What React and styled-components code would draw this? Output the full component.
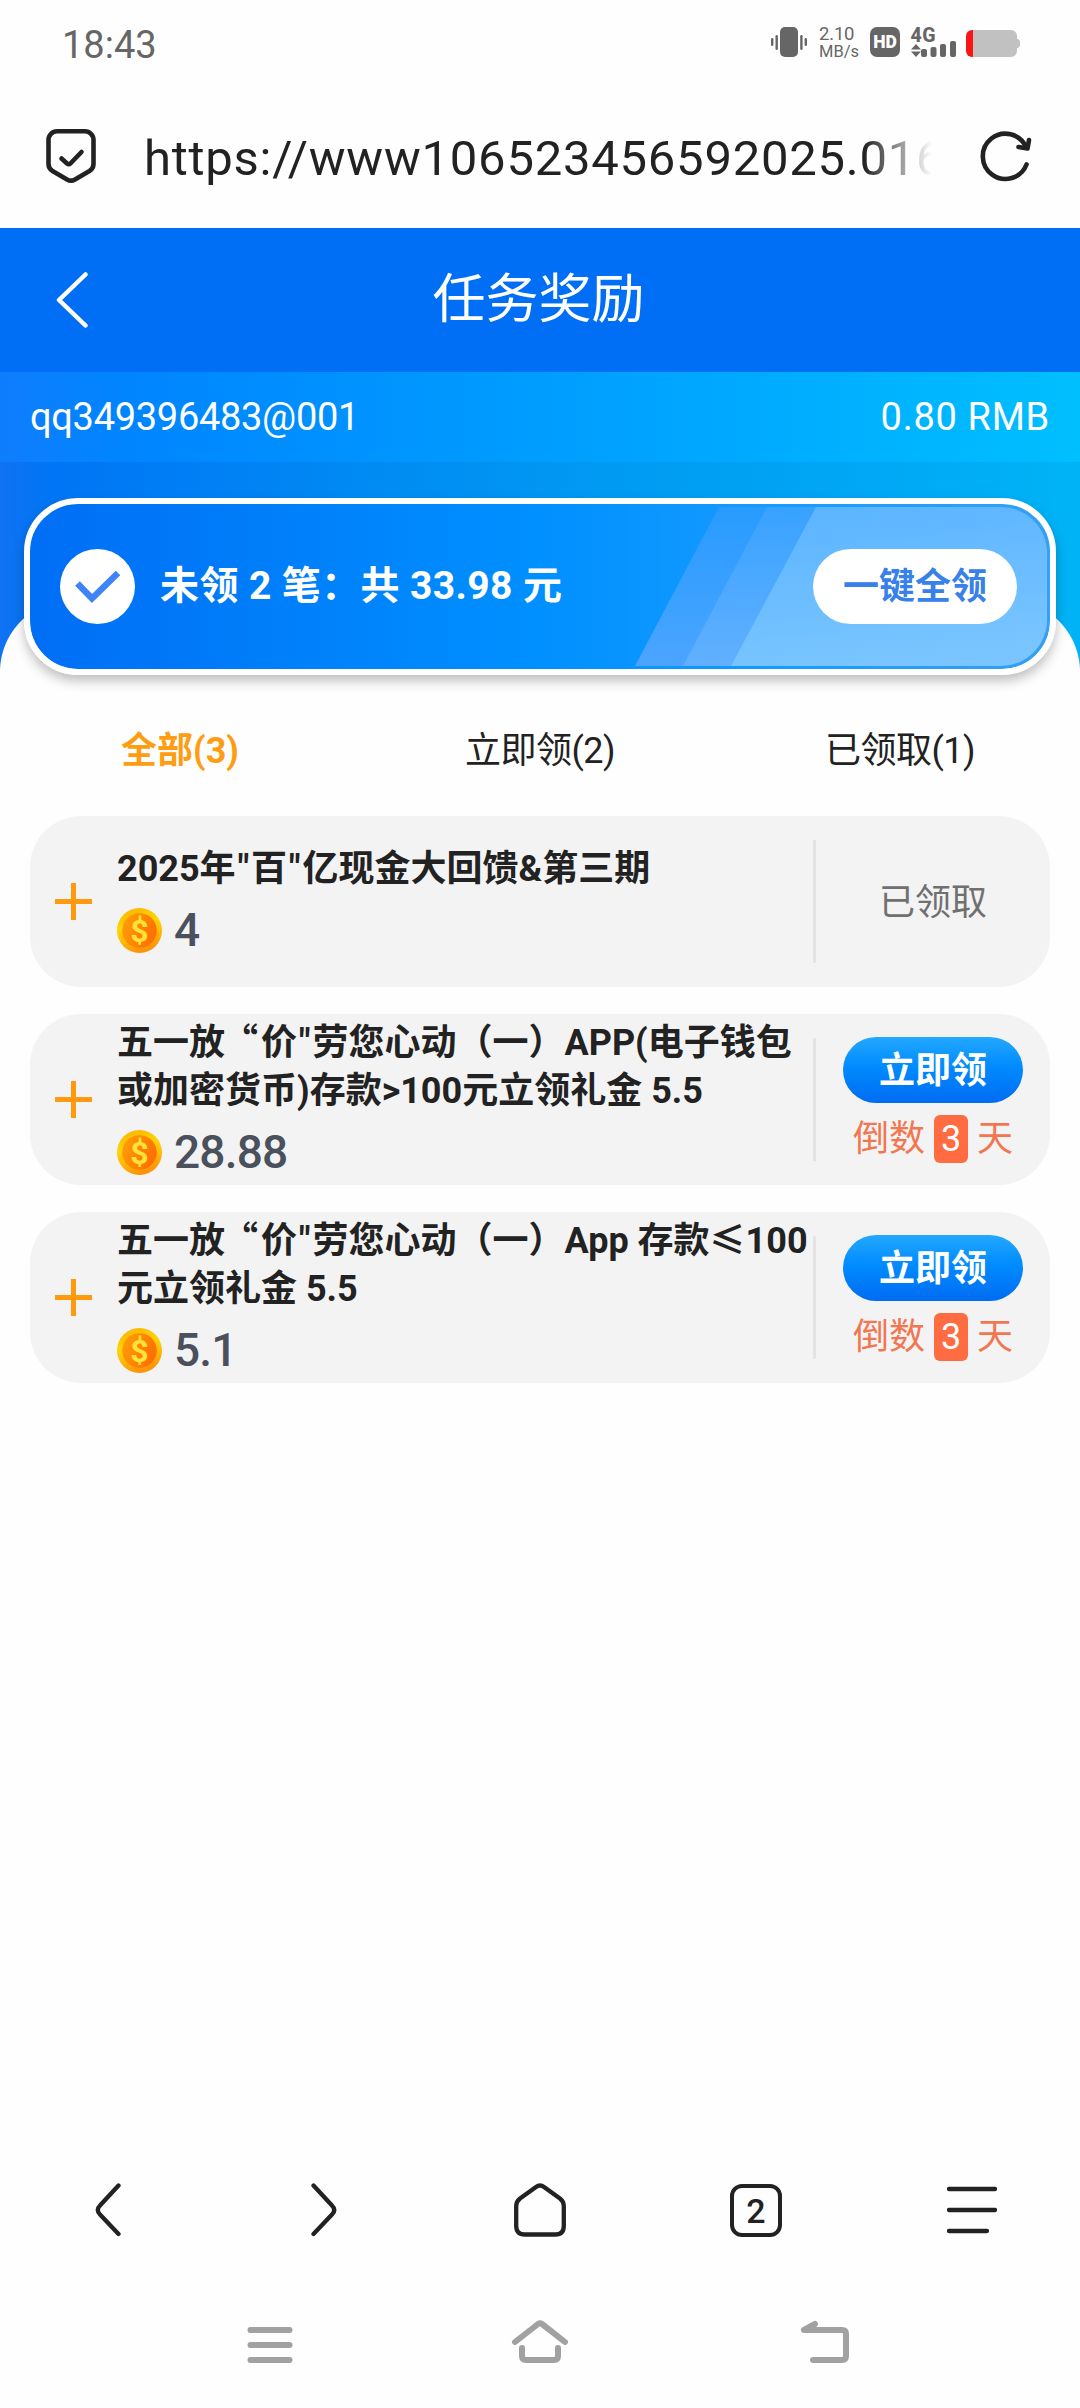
import { useState } from "react";
import styled, { createGlobalStyle } from "styled-components";

const tasks = [
	{
		id: 1,
		title: ['2025年"百"亿现金大回馈&第三期'],
		amount: "4",
		claimed: true,
	},
	{
		id: 2,
		title: ['五一放“价"劳您心动（一）APP(电子钱包', "或加密货币)存款>100元立领礼金 5.5"],
		amount: "28.88",
		days: 3,
	},
	{
		id: 3,
		title: ['五一放“价"劳您心动（一）App 存款≤100', "元立领礼金 5.5"],
		amount: "5.1",
		days: 3,
	},
];

const tabs = ["全部(3)", "立即领(2)", "已领取(1)"];

// the opening quote and ≤ need the full-width glyphs
function renderTitle(line) {
	return line.split(/([“"≤])/).map((part, i) => {
		if (part === "“") return <OpenQuote key={i}>{part}</OpenQuote>;
		if (part === "≤") return <WideGlyph key={i}>{part}</WideGlyph>;
		if (part === '"') return <Quote key={i}>{part}</Quote>;
		return part;
	});
}

function StatusIcons() {
	return (
		<StatusGroup>
			<svg width="36" height="30" viewBox="0 0 36 30" fill="#666">
				<rect x="9" y="0" width="18" height="30" rx="5" />
				<rect x="0" y="11" width="2.4" height="8" rx="1.2" />
				<rect x="4.5" y="8" width="2.4" height="15" rx="1.2" />
				<rect x="29.2" y="8" width="2.4" height="15" rx="1.2" />
				<rect x="33.6" y="11" width="2.4" height="8" rx="1.2" />
			</svg>
			<Speed>
				<span>2.10</span>
				<small>MB/s</small>
			</Speed>
			<Hd>HD</Hd>
			<Signal width="46" height="30" viewBox="0 0 46 30">
				<text x="0.5" y="14.8" fontSize="19.5" fontWeight="800" textLength="25">
					4G
				</text>
				<path d="M6 17l5 5.5H1zM6 30l5-5.5H1z" />
				<rect x="11" y="22" width="6" height="8" rx="2" />
				<rect x="20.5" y="20" width="6" height="10" rx="2" />
				<rect x="30" y="17" width="6" height="13" rx="2" />
				<rect x="40" y="14" width="6" height="16" rx="2" />
			</Signal>
			<svg width="54" height="30" viewBox="0 0 54 30">
				<path
					d="M6 3h39a6 6 0 0 1 6 6v3h1q2 1 2 3v3q0 2-2 3h-1v3a6 6 0 0 1-6 6H6z"
					fill="#c1c1c1"
				/>
				<path d="M7 3H6a6 6 0 0 0-6 6v15a6 6 0 0 0 6 6h1z" fill="#fb1414" />
			</svg>
		</StatusGroup>
	);
}

function Coin() {
	return (
		<svg width="45" height="45" viewBox="0 0 45 45">
			<defs>
				<linearGradient id="rim" x1="0.3" y1="0" x2="0.6" y2="1">
					<stop offset="0" stopColor="#ffb400" />
					<stop offset="0.35" stopColor="#ffd400" />
					<stop offset="0.6" stopColor="#ffbf05" />
					<stop offset="1" stopColor="#ff8c0a" />
				</linearGradient>
				<linearGradient id="face" x1="0" y1="0.2" x2="1" y2="0.6">
					<stop offset="0" stopColor="#ff9d0a" />
					<stop offset="1" stopColor="#ff6d00" />
				</linearGradient>
			</defs>
			<circle cx="22.5" cy="22.5" r="22.5" fill="url(#rim)" />
			<circle cx="22.5" cy="22.5" r="17.3" fill="url(#face)" />
			<text
				x="22.5"
				y="34"
				fontSize="32"
				fontWeight="700"
				textAnchor="middle"
				fill="#ffe437"
			>
				$
			</text>
		</svg>
	);
}

function TaskCard({ task }) {
	return (
		<Card>
			<Plus width="37" height="37" viewBox="0 0 37 37">
				<path d="M18.5 0v37M0 18.5h37" stroke="#ff9a10" strokeWidth="5" />
			</Plus>
			<CardBody>
				{task.title.map((line) => (
					<CardTitle key={line}>{renderTitle(line)}</CardTitle>
				))}
				<Reward>
					<Coin />
					<Amount>{task.amount}</Amount>
				</Reward>
			</CardBody>
			<CardSide>
				{task.claimed ? (
					<Claimed>已领取</Claimed>
				) : (
					<>
						<ClaimButton>立即领</ClaimButton>
						<Countdown>
							倒数<Days>{task.days}</Days>天
						</Countdown>
					</>
				)}
			</CardSide>
		</Card>
	);
}

export default function App() {
	const [activeTab, setActiveTab] = useState(0);

	return (
		<Page>
			<GlobalStyle />
			<StatusBar>
				<Clock>18:43</Clock>
				<StatusIcons />
			</StatusBar>
			<AddressBar>
				<ToolIcon width="50" height="56" viewBox="0 0 50 56">
					<path d="M11 3.3h28a8.5 8.5 0 0 1 8.5 8.5V36q0 4.5-4 7L29 51.5q-4 2.4-8 0L6.5 43q-4-2.5-4-7V11.8A8.5 8.5 0 0 1 11 3.3z" />
					<path d="M15.5 30.5l5.5 5q1.7 1.4 3.4 0L35.5 24" />
				</ToolIcon>
				<Url>https://www106523456592025.016</Url>
				<ToolIcon width="52" height="52" viewBox="0 0 52 52">
					<path d="M46.5 34.5A22.6 22.6 0 1 1 46 17" />
					<path d="M49 10l-1.5 8.5L38.5 17" />
				</ToolIcon>
			</AddressBar>

			<Header>
				<BackArrow width="32" height="56" viewBox="0 0 32 56">
					<path d="M29.5 2.5L3 28l26.5 25.5" />
				</BackArrow>
				<HeaderTitle>任务奖励</HeaderTitle>
			</Header>
			<Account>
				<span>qq349396483@001</span>
				<Balance>0.80 RMB</Balance>
			</Account>

			<Hero>
				<Banner>
					<BannerArt viewBox="0 0 412 159" width="412" height="159">
						<defs>
							<linearGradient id="s1" x1="0" y1="0" x2="0" y2="1">
								<stop offset="0" stopColor="#289bff" />
								<stop offset="1" stopColor="#4ba5ff" />
							</linearGradient>
							<linearGradient id="s2" x1="0" y1="0" x2="0" y2="1">
								<stop offset="0" stopColor="#38a2ff" />
								<stop offset="1" stopColor="#62b0ff" />
							</linearGradient>
							<linearGradient id="s3" x1="0.3" y1="0" x2="0.5" y2="1">
								<stop offset="0" stopColor="#5cb5ff" />
								<stop offset="1" stopColor="#7ac5ff" />
							</linearGradient>
						</defs>
						<path d="M84 0h60L60 159H0z" fill="url(#s1)" />
						<path d="M132 0h60l-60 159H48z" fill="url(#s2)" />
						<path
							d="M181 0h185a46 46 0 0 1 46 46v67a46 46 0 0 1-46 46H96z"
							fill="url(#s3)"
						/>
					</BannerArt>
					<CheckCircle>
						<svg width="46" height="34" viewBox="0 0 46 34">
							<path
								d="M2.5 13.5L17 28.5 43 3"
								fill="none"
								stroke="#3f83f8"
								strokeWidth="6.5"
							/>
						</svg>
					</CheckCircle>
					<BannerText>未领 2 笔：共 33.98 元</BannerText>
					<ClaimAll>一键全领</ClaimAll>
				</Banner>
			</Hero>

			<Content>
				<Tabs>
					{tabs.map((tab, i) => (
						<Tab
							key={tab}
							$active={i === activeTab}
							onClick={() => setActiveTab(i)}
						>
							{tab}
						</Tab>
					))}
				</Tabs>
				<List>
					{tasks.map((task) => (
						<TaskCard key={task.id} task={task} />
					))}
				</List>
			</Content>

			<BrowserNav>
				<LineIcon width="26" height="54" viewBox="0 0 26 54">
					<path d="M23.5 2.5L5 22.5q-4.5 4.5 0 9L23.5 51" />
				</LineIcon>
				<LineIcon width="26" height="54" viewBox="0 0 26 54">
					<path d="M2.5 2.5L21 22.5q4.5 4.5 0 9L2.5 51" />
				</LineIcon>
				<LineIcon width="52" height="54" viewBox="0 0 52 54">
					<path d="M22 4q4-3 8 0l16 11.5q3.8 3 3.8 7.5v20q0 8.5-8.5 8.5H10.7q-8.5 0-8.5-8.5V23q0-4.5 3.8-7.5z" />
				</LineIcon>
				<TabCount>2</TabCount>
				<LineIcon width="50" height="54" viewBox="0 0 50 54">
					<path d="M2 6h46M2 27h46M2 48h38" />
				</LineIcon>
			</BrowserNav>
			<SystemNav>
				<SystemIcon width="56" height="46" viewBox="0 0 56 46">
					<path d="M8.5 8h39M8.5 23h39M8.5 38h39" />
				</SystemIcon>
				<SystemIcon width="56" height="46" viewBox="0 0 56 46">
					<path d="M3 20L26 2q2-1.5 4 0l23 18" />
					<path d="M10 26v8q0 4 4 4h28q4 0 4-4v-8" />
				</SystemIcon>
				<SystemIcon width="56" height="46" viewBox="-27 0 56 46">
					<path d="M6 2L-5 8h38q4 0 4 4v22q0 4-4 4H4" />
				</SystemIcon>
			</SystemNav>
		</Page>
	);
}

const GlobalStyle = createGlobalStyle`
	* {
		box-sizing: border-box;
	}
	body {
		margin: 0;
		background: #fefefe;
		font-family: Roboto, "Noto Sans CJK SC", sans-serif;
		color: #222;
	}
	button {
		border: none;
		padding: 0;
		font-family: inherit;
		cursor: pointer;
	}
	svg {
		display: block;
		flex-shrink: 0;
	}
`;

const Page = styled.div`
	width: 1080px;
	height: 2408px;
	display: flex;
	flex-direction: column;
	background: #fefefe;
	overflow: hidden;
`;

const StatusBar = styled.div`
	height: 84px;
	padding: 0 60px 0 62px;
	display: flex;
	align-items: center;
	justify-content: space-between;
`;

const Clock = styled.span`
	font-size: 38px;
	line-height: 48px;
	padding-top: 5px;
	color: #666;
`;

const StatusGroup = styled.div`
	display: flex;
	align-items: center;
	gap: 10px;
`;

const Signal = styled.svg`
	fill: #666;
	overflow: visible;
`;

const Speed = styled.div`
	width: 39px;
	margin: 0 2px 0 2px;
	padding-top: 2px;
	display: flex;
	flex-direction: column;
	color: #666;
	span {
		font-size: 18.5px;
		line-height: 17px;
		letter-spacing: -0.2px;
	}
	small {
		font-size: 16.5px;
		line-height: 17px;
	}
`;

const Hd = styled.div`
	width: 30px;
	height: 30px;
	border-radius: 7px;
	background: #666;
	color: white;
	font-size: 17.5px;
	font-weight: 900;
	line-height: 31px;
	text-align: center;
`;

const AddressBar = styled.div`
	height: 144px;
	padding: 0 48px 0 46px;
	display: flex;
	align-items: center;
`;

const ToolIcon = styled.svg`
	fill: none;
	stroke: #222;
	stroke-width: 4.6;
	stroke-linecap: round;
	stroke-linejoin: round;
`;

const Url = styled.div`
	width: 791px;
	margin: 5px 45px 0 48px;
	font-size: 49px;
	line-height: 60px;
	letter-spacing: 0.75px;
	white-space: nowrap;
	overflow: hidden;
	mask-image: linear-gradient(to right, #000 720px, transparent 788px);
`;

const Header = styled.header`
	height: 144px;
	padding: 0 56px;
	display: flex;
	align-items: center;
	background: #006ef5;
`;

const BackArrow = styled.svg`
	fill: none;
	stroke: white;
	stroke-width: 4.5;
	stroke-linecap: round;
	stroke-linejoin: round;
`;

const HeaderTitle = styled.h1`
	flex: 1;
	margin: 0 35px 0 0;
	font-size: 53px;
	font-weight: 400;
	line-height: 72px;
	text-align: center;
	color: white;
`;

const Account = styled.div`
	height: 90px;
	padding: 0 30px;
	display: flex;
	align-items: center;
	justify-content: space-between;
	font-size: 38px;
	letter-spacing: -0.3px;
	color: white;
	background: linear-gradient(to right, #0f7dfd, #0085ff 12%, #009dff 50%, #00bfff);
`;

const Balance = styled.span`
	letter-spacing: 0.7px;
`;

const Hero = styled.div`
	height: 213px;
	padding: 36px 24px 0;
	background:
		radial-gradient(circle at 72px 72px, #fefefe 71.5px, transparent 72.5px) 0 138px /
			72px 75px no-repeat,
		radial-gradient(circle at 0 72px, #fefefe 71.5px, transparent 72.5px) 1008px
			138px / 72px 75px no-repeat,
		linear-gradient(#fefefe, #fefefe) 72px 138px / 936px 75px no-repeat,
		linear-gradient(to right, #1073f3, #0075f5 5%, #0096f2 50%, #00b3f6);
`;

const Banner = styled.div`
	position: relative;
	height: 177px;
	padding: 0 33px 0 30px;
	display: flex;
	align-items: center;
	border: 6px solid white;
	border-radius: 54px;
	background: linear-gradient(to right, #006ef5, #0090ff 50%, #189cff 75%, #35a0f5);
	background-clip: padding-box;
	box-shadow: 0 6px 12px rgba(0, 0, 0, 0.25);
`;

const BannerArt = styled.svg`
	position: absolute;
	right: 3px;
	top: 3px;
`;

const CheckCircle = styled.div`
	width: 75px;
	height: 75px;
	border-radius: 50%;
	display: flex;
	align-items: center;
	justify-content: center;
	background: white;
`;

const BannerText = styled.strong`
	flex: 1;
	margin-left: 25px;
	padding-bottom: 2px;
	font-size: 39px;
	line-height: 56px;
	letter-spacing: 0.4px;
	color: white;
`;

const ClaimAll = styled.button`
	position: relative;
	width: 204px;
	height: 75px;
	padding-bottom: 7px;
	border-radius: 38px;
	background: white;
	font-size: 36px;
	font-weight: 700;
	color: #3880ea;
`;

const WideGlyph = styled.span`
	font-family: "Noto Sans CJK SC", sans-serif;
	line-height: 1;
`;

const OpenQuote = styled(WideGlyph)`
	margin: 0 3px 0 -3px;
`;

const Quote = styled.span`
	margin: 0 2px;
`;

const Content = styled.main`
	flex: 1;
	display: flex;
	flex-direction: column;
`;

const Tabs = styled.div`
	height: 141px;
	padding-top: 3px;
	display: flex;
	align-items: center;
`;

const Tab = styled.button`
	flex: 1;
	height: 60px;
	background: none;
	font-size: 36px;
	font-weight: ${(props) => (props.$active ? 700 : 400)};
	letter-spacing: ${(props) => (props.$active ? 0 : "-0.5px")};
	color: ${(props) => (props.$active ? "#ff9d12" : "#222")};
`;

const List = styled.div`
	padding: 0 30px;
	display: flex;
	flex-direction: column;
	gap: 27px;
`;

const Card = styled.div`
	height: 171px;
	padding-left: 25px;
	display: flex;
	align-items: center;
	border-radius: 51px;
	background: #f3f3f3;
`;

const Plus = styled.svg`
	margin-right: 25px;
`;

const CardBody = styled.div`
	flex: 1;
	display: flex;
	flex-direction: column;
`;

const CardTitle = styled.div`
	height: 48px;
	font-size: 36px;
	font-weight: 700;
	line-height: 51px;
	white-space: nowrap;
`;

const Reward = styled.div`
	height: 57px;
	margin-top: 10px;
	display: flex;
	align-items: center;
	gap: 12px;
`;

const Amount = styled.span`
	font-size: 46px;
	font-weight: 500;
	line-height: 57px;
	letter-spacing: -0.8px;
	color: #4a505c;
`;

const CardSide = styled.div`
	width: 237px;
	height: 123px;
	border-left: 3px solid #e4e4e4;
	display: flex;
	flex-direction: column;
	align-items: center;
	justify-content: center;
	gap: 12px;
`;

const Claimed = styled.span`
	padding-bottom: 5px;
	font-size: 36px;
	color: #707070;
`;

const ClaimButton = styled.button`
	width: 180px;
	height: 66px;
	padding-bottom: 5px;
	flex-shrink: 0;
	border-radius: 33px;
	background: linear-gradient(#24a8ff, #008bff 45%, #006cf2);
	font-size: 36px;
	font-weight: 700;
	color: white;
`;

const Countdown = styled.div`
	display: flex;
	align-items: center;
	flex-shrink: 0;
	font-size: 36px;
	line-height: 48px;
	color: #f2764f;
`;

const Days = styled.span`
	width: 34px;
	height: 48px;
	margin: 0 9px;
	border-radius: 6px;
	background: #ff6c42;
	text-align: center;
	color: white;
`;

const BrowserNav = styled.nav`
	height: 144px;
	display: grid;
	grid-template-columns: repeat(5, 1fr);
	align-items: center;
	justify-items: center;
`;

const LineIcon = styled.svg`
	fill: none;
	stroke: #222;
	stroke-width: 4.3;
	stroke-linecap: round;
	stroke-linejoin: round;
`;

const TabCount = styled.div`
	width: 52px;
	height: 53px;
	border: 4.3px solid #222;
	border-radius: 12px;
	font-size: 34px;
	font-weight: 500;
	line-height: 46px;
	text-align: center;
`;

const SystemNav = styled.nav`
	height: 126px;
	padding: 0 135px;
	display: grid;
	grid-template-columns: repeat(3, 1fr);
	align-items: center;
	justify-items: center;
`;

const SystemIcon = styled.svg`
	fill: none;
	stroke: #a1a1a1;
	stroke-width: 6;
	stroke-linecap: round;
	stroke-linejoin: round;
	overflow: visible;
`;
